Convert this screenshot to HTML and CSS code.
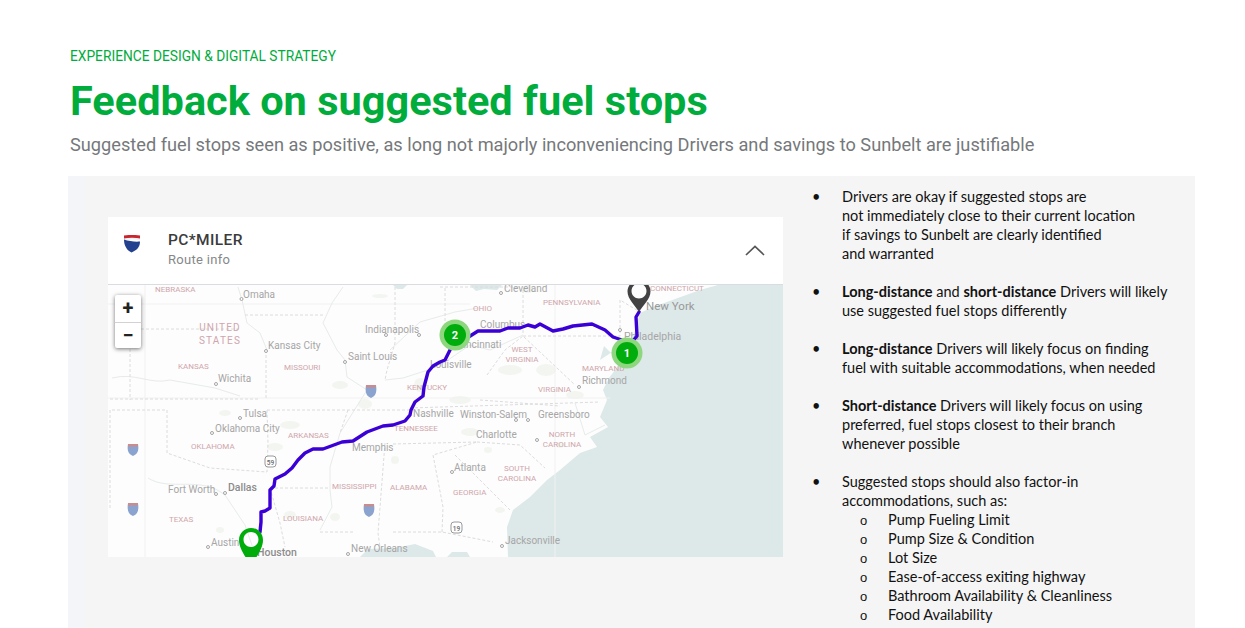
FILE: index.html
```html
<!DOCTYPE html>
<html lang="en">
<head>
<meta charset="utf-8">
<title>Feedback on suggested fuel stops</title>
<link rel="stylesheet" href="styles.css">
</head>
<body>
<header class="head">
  <p class="eyebrow">EXPERIENCE DESIGN &amp; DIGITAL STRATEGY</p>
  <h1 class="title">Feedback on suggested fuel stops</h1>
  <p class="subtitle">Suggested fuel stops seen as positive, as long not majorly inconveniencing Drivers and savings to Sunbelt are justifiable</p>
</header>
<main class="panel">
  <div class="strip"></div>
  <section class="card">
    <div class="card-head">
      <svg class="logo" width="16" height="18" viewBox="0 0 16 18">
        <path d="M0 .5C5 -.3 11 -.3 16 .5V4C11 3 5 3 0 4Z" fill="#c9252c"/>
        <path d="M0 3.4C5 2.5 11 2.5 16 3.4V5.2C11 4.4 5 4.4 0 5.2Z" fill="#eef0f4"/>
        <path d="M0 4.6C5 6.4 11 7 16 6.6C16 12 13 15.500 7.500 17.500C3 15.500 0 11 0 4.6Z" fill="#24418f"/>
      </svg>
      <div class="card-titles">
        <div class="card-title">PC*MILER</div>
        <div class="card-sub">Route info</div>
      </div>
      <svg class="chev" width="20" height="11" viewBox="0 0 20 11"><path d="M1 10L10 1.500L19 10" fill="none" stroke="#555" stroke-width="1.700"/></svg>
    </div>
    <div class="map">
      <svg class="map-svg" width="675" height="272" viewBox="108 285 675 272">
        <rect x="108" y="285" width="675" height="272" fill="#fdfdfd"/>
        <g class="terrain">
          <ellipse cx="225" cy="413" rx="6" ry="3"/><ellipse cx="290" cy="425" rx="10" ry="4"/><ellipse cx="275" cy="447" rx="8" ry="4"/>
          <ellipse cx="365" cy="404" rx="7" ry="5"/><ellipse cx="340" cy="385" rx="8" ry="4"/><ellipse cx="460" cy="400" rx="11" ry="4"/>
          <ellipse cx="470" cy="432" rx="9" ry="4"/><ellipse cx="510" cy="370" rx="12" ry="5"/><ellipse cx="546" cy="370" rx="10" ry="6"/>
          <ellipse cx="420" cy="385" rx="6" ry="7"/><ellipse cx="395" cy="460" rx="4" ry="4"/><ellipse cx="500" cy="510" rx="5" ry="3"/>
          <ellipse cx="560" cy="445" rx="5" ry="3"/><ellipse cx="488" cy="450" rx="4" ry="3"/><ellipse cx="290" cy="515" rx="6" ry="4"/>
          <ellipse cx="335" cy="517" rx="5" ry="4"/><ellipse cx="220" cy="530" rx="4" ry="3"/><ellipse cx="528" cy="289" rx="6" ry="4"/>
          <ellipse cx="380" cy="296" rx="8" ry="2"/><ellipse cx="575" cy="395" rx="9" ry="4"/>
        </g>
        <path class="ocean" d="M718 285L783 285L783 557L508 557L507 527L513 510L530 497L547 480L560 470L580 453L597 447L590 437L608 427L600 417L607 400L603 390L609 378L618 366L612 352L600 360L604 346L620 362L626 345L633 337L640 313L653 307L700 290Z"/>
        <path class="ocean" d="M360 557L368 549L395 548L415 544L433 551L436 557ZM447 557L452 552L467 552L470 557ZM393 285L407 285L403 289L397 289ZM470 285L502 285L497 290L484 289L476 291Z"/>
        <g class="grid">
          <path d="M555 285V557M145 285V557M108 398H610M108 304H470"/>
        </g>
        <g class="river">
          <path d="M238 287L242 300L247 323L260 333L267 350M343 287L332 303L323 323L337 350L345 360L347 377L367 390L340 433L330 467L330 490L332 507L320 530M385 380L403 378L428 370L445 362L470 345L490 350L523 335"/>
          <path d="M112 378C135 372 150 385 170 380L215 388L240 396M148 478C170 492 200 475 225 495L245 525L256 557M390 350L420 322L455 312L478 308M575 403L585 435L605 425"/>
        </g>
        <g class="border">
          <path d="M141 329H240M245 315H323M266 350V400M110 399H260M130 329V400M395 287V343L387 370L385 380M445 288V327M523 290V335M523 336H620L620 300L640 312M112 410H167V453L210 468L267 472L268 443L267 410M110 410V510M267 410H420M393 444L477 442L433 455L443 507L442 533M348 410L340 433M270 488H330M270 488L280 523L285 547M320 532H355M385 443L378 533L380 547M393 532H442L493 542M410 408L600 402M477 442L520 445L545 468M480 400L560 406M487 375L505 350L523 336L575 385M440 287H520M455 455L510 510"/>
        </g>
        <g class="shield">
          <path d="M128 444H138C139 450 138 454 133 456C128 454 127 450 128 444ZM128 503H138C139 510 138 514 133 516C128 514 127 510 128 503ZM364 504H374C375 511 374 515 369 517C364 515 363 511 364 504ZM366 385H376C377 392 376 396 371 398C366 396 365 392 366 385Z"/>
          <path class="shield-top" d="M128 444H138V446.500H128ZM128 503H138V505.500H128ZM364 504H374V506.500H364ZM366 385H376V387.500H366Z"/>
        </g>
        <g class="us">
          <rect x="265" y="456" width="11" height="11" rx="3"/><rect x="451" y="522" width="11" height="11" rx="3"/>
          <text x="270.500" y="464.500">59</text><text x="456.500" y="530.500">19</text>
        </g>
        <g class="dots">
          <circle cx="241.500" cy="299" r="1.500"/><circle cx="386" cy="335" r="1.500"/><circle cx="266" cy="351" r="1.500"/><circle cx="345" cy="362" r="1.500"/>
          <circle cx="216" cy="384" r="1.500"/><circle cx="240" cy="418" r="1.500"/><circle cx="212" cy="433" r="1.500"/><circle cx="216" cy="494" r="1.500"/>
          <circle cx="225" cy="493" r="1.500"/><circle cx="208" cy="547" r="1.500"/><circle cx="348" cy="554" r="1.500"/><circle cx="502" cy="546" r="1.500"/>
          <circle cx="452" cy="472" r="1.500"/><circle cx="516" cy="420" r="1.500"/><circle cx="528" cy="420" r="1.500"/><circle cx="537" cy="440" r="1.500"/>
          <circle cx="579" cy="387" r="1.500"/><circle cx="620" cy="330" r="1.500"/><circle cx="501" cy="293" r="1.500"/><circle cx="419" cy="335" r="1.500"/>
        </g>
        <g class="states">
          <text x="155" y="292">NEBRASKA</text><text x="178" y="369">KANSAS</text><text x="284" y="370">MISSOURI</text>
          <text x="407" y="390">KENTUCKY</text><text x="473" y="311">OHIO</text><text x="543" y="305">PENNSYLVANIA</text>
          <text x="650" y="291">CONNECTICUT</text><text x="582" y="371">MARYLAND</text><text x="538" y="392">VIRGINIA</text>
          <text x="288" y="438">ARKANSAS</text><text x="394" y="431">TENNESSEE</text><text x="191" y="449">OKLAHOMA</text>
          <text x="332" y="489">MISSISSIPPI</text><text x="390" y="490">ALABAMA</text><text x="453" y="495">GEORGIA</text>
          <text x="169" y="522">TEXAS</text><text x="283" y="521">LOUISIANA</text>
          <text class="mid" x="522" y="352">WEST</text><text class="mid" x="522" y="362">VIRGINIA</text>
          <text class="mid" x="562" y="437">NORTH</text><text class="mid" x="562" y="447">CAROLINA</text>
          <text class="mid" x="517" y="471">SOUTH</text><text class="mid" x="517" y="481">CAROLINA</text>
          <text class="us-name" x="220" y="331">UNITED</text><text class="us-name" x="220" y="343.500">STATES</text>
        </g>
        <g class="cities">
          <text x="243" y="298">Omaha</text><text x="365" y="333">Indianapolis</text><text x="268" y="349">Kansas City</text>
          <text x="348" y="360">Saint Louis</text><text x="218" y="382">Wichita</text><text x="243" y="417">Tulsa</text>
          <text x="215" y="432">Oklahoma City</text><text x="352" y="451">Memphis</text><text x="413" y="417">Nashville</text>
          <text x="460" y="418">Winston-Salem</text><text x="476" y="438">Charlotte</text><text x="538" y="418">Greensboro</text>
          <text x="454" y="471">Atlanta</text><text x="168" y="493">Fort Worth</text><text class="big" x="228" y="491">Dallas</text>
          <text x="211" y="546">Austin</text><text class="big" x="257" y="556">Houston</text><text x="351" y="552">New Orleans</text>
          <text x="505" y="544">Jacksonville</text><text x="504" y="292">Cleveland</text><text x="480" y="328">Columbus</text>
          <text x="457" y="348">Cincinnati</text><text x="430" y="368">Louisville</text><text class="ny" x="646" y="310">New York</text>
          <text class="phl" x="624" y="340">Philadelphia</text><text x="582" y="384">Richmond</text>
        </g>
        <path class="route" d="M260 532L261 522L261 512L265 511L270 508L270 490L274 486L275 479L285 474L292 468L298 460L305 453L313 449L323 449L342 442L353 441L367 432L383 426L393 425L405 421L410 415L411 410L415 402L423 396L424 387L428 372L433 366L440 362L445 360L450 350L455 335L467 338L478 331L500 331L508 328L520 328L528 325L535 327L540 324L553 331L563 329L573 326L592 324L605 330L613 337L622 340L627 353L632 342L637 336L636 317L639 312"/>
        <path class="pin-dark" fill-rule="evenodd" d="M639 312C635 305 627.500 299 627.500 291.500C627.500 285 633 280 639 280C645 280 650.500 285 650.500 291.500C650.500 299 643 305 639 312ZM639 283.500C634.800 283.500 631.500 286.800 631.500 291C631.500 295.200 634.800 298.500 639 298.500C643.200 298.500 646.500 295.200 646.500 291C646.500 286.800 643.200 283.500 639 283.500Z"/>
        <path class="pin-green" fill-rule="evenodd" d="M251 566C246 557 239 549 239 540C239 533 244.500 528 251 528C257.500 528 263 533 263 540C263 549 256 557 251 566ZM251 532C246.800 532 243.500 535.300 243.500 539.500C243.500 543.700 246.800 547 251 547C255.200 547 258.500 543.700 258.500 539.500C258.500 535.300 255.200 532 251 532Z"/>
        <g class="stop">
          <circle class="halo" cx="455" cy="335" r="15.500"/><circle class="core" cx="455" cy="335" r="11"/><text x="455" y="339">2</text>
          <circle class="halo" cx="627" cy="353" r="15.500"/><circle class="core" cx="627" cy="353" r="11"/><text x="627" y="357">1</text>
        </g>
      </svg>
      <div class="zoom-ctl">
        <div class="zoom-btn">+</div>
        <div class="zoom-btn">&minus;</div>
      </div>
    </div>
  </section>
  <ul class="notes">
    <li>Drivers are okay if suggested stops are<br>not immediately close to their current location<br>if savings to Sunbelt are clearly identified<br>and warranted</li>
    <li><b>Long-distance</b> and <b>short-distance</b> Drivers will likely<br>use suggested fuel stops differently</li>
    <li><b>Long-distance</b> Drivers will likely focus on finding<br>fuel with suitable accommodations, when needed</li>
    <li><b>Short-distance</b> Drivers will likely focus on using<br>preferred, fuel stops closest to their branch<br>whenever possible</li>
    <li>Suggested stops should also factor-in<br>accommodations, such as:
      <ul class="subnotes">
        <li>Pump Fueling Limit</li>
        <li>Pump Size &amp; Condition</li>
        <li>Lot Size</li>
        <li>Ease-of-access exiting highway</li>
        <li>Bathroom Availability &amp; Cleanliness</li>
        <li>Food Availability</li>
      </ul>
    </li>
  </ul>
</main>
</body>
</html>
```

FILE: styles.css
```css
* { box-sizing: border-box; }
html, body { margin: 0; height: 628px; overflow: hidden; background: #fff; }
body { font-family: Roboto, sans-serif; }

.head { height: 176px; padding: 48px 0 0 70px; }
.eyebrow { margin: 0; font-size: 13.750px; line-height: 17px; color: #00ac3c; }
.title { margin: 11px 0 0; font-size: 41.500px; line-height: 50px; font-weight: 700; color: #00ac3c; }
.subtitle { margin: 8px 0 0; font-size: 18.200px; line-height: 22px; color: #75787b; white-space: nowrap; }

.panel { display: flex; width: 1127px; height: 452px; margin-left: 68px; background: #f5f5f5; overflow: hidden; }
.strip { width: 17px; flex: none; background: #f4f5f8; }

.card { width: 675px; height: 340px; flex: none; margin: 41px 0 0 23px; background: #fff; }
.card-head { display: flex; align-items: center; height: 68px; padding: 0 18px 0 16px; border-bottom: 1px solid #d9dde1; }
.logo { flex: none; margin-top: -14px; }
.card-titles { flex: 1; margin: -2px 0 0 28px; }
.card-title { font-size: 15.500px; line-height: 20px; font-weight: 500; color: #3b3b3b; letter-spacing: .4px; }
.card-sub { font-size: 13px; line-height: 19px; color: #85888a; letter-spacing: .3px; }
.chev { flex: none; margin-top: -1px; }

.map { position: relative; height: 272px; overflow: hidden; }
.map-svg { display: block; }
.ocean { fill: #dde8e9; }
.terrain { fill: #f3f6f0; }
.grid path { fill: none; stroke: #f1f1f1; stroke-width: 1; }
.river path { fill: none; stroke: #e6ecea; stroke-width: 1; }
.border path { fill: none; stroke: #dcdcdc; stroke-width: 1; stroke-dasharray: 3 2; }
.shield path { fill: #8aa3cf; }
.shield .shield-top { fill: #c98d8f; }
.us rect { fill: #fff; stroke: #999; stroke-width: 1; }
.us text { font: 500 6.500px Roboto, sans-serif; fill: #666; text-anchor: middle; }
.dots circle { fill: #fff; stroke: #a5a5a5; stroke-width: 1; }
.states text { font: 8px Roboto, sans-serif; fill: #cfa6ab; }
.states .mid { text-anchor: middle; }
.states .us-name { font-size: 10px; letter-spacing: 1.200px; text-anchor: middle; }
.cities text { font: 10px Roboto, sans-serif; fill: #a6a6a6; }
.cities .big { fill: #8c8c8c; font-weight: 500; font-size: 10.500px; }
.cities .ny { fill: #999; font-size: 11.500px; }
.cities .phl { font-size: 10.500px; }
.route { fill: none; stroke: #3a00d6; stroke-width: 3.400; stroke-linejoin: round; stroke-linecap: round; }
.pin-dark { fill: #424242; }
.pin-green { fill: #00ac0a; }
.stop .halo { fill: #8ed77f; }
.stop .core { fill: #00ad0c; }
.stop text { font: 700 11px Roboto, sans-serif; fill: #fff; text-anchor: middle; }

.zoom-ctl { position: absolute; left: 7px; top: 10px; width: 26px; background: #fff; border-radius: 2px; box-shadow: 0 1px 4px rgba(0,0,0,.55); }
.zoom-btn { display: flex; align-items: center; justify-content: center; height: 26.500px; font-size: 20px; font-weight: 700; color: #222; }
.zoom-btn + .zoom-btn { border-top: 1px solid #d2d2d2; }

.notes { list-style: none; margin: 11px 0 0; padding: 0 0 0 29px; width: 390px; flex: none; font-family: Lato, sans-serif; font-size: 14.500px; line-height: 19px; color: #111; }
.notes > li { position: relative; padding-left: 30px; margin-bottom: 19px; white-space: nowrap; }
.notes > li::before { content: "\2022"; position: absolute; left: 0; top: 0; }
.notes b { font-weight: 700; }
.subnotes { list-style: none; margin: 0; padding: 0 0 0 46px; }
.subnotes li { position: relative; }
.subnotes li::before { content: "o"; position: absolute; left: -28px; top: 1px; font-family: "Liberation Sans", sans-serif; font-size: 13px; }
```
